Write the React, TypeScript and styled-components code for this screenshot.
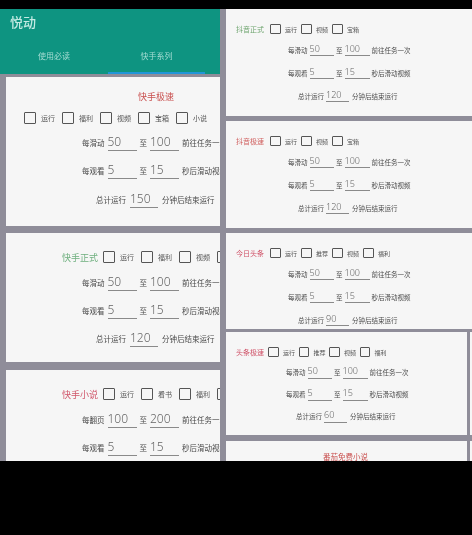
import React from "react";
import styled, { createGlobalStyle } from "styled-components";

const Global = createGlobalStyle`
  html, body { margin: 0; padding: 0; background: #000; }
  body { font-family: "Noto Sans CJK SC", "Noto Sans", sans-serif; }
`;

const Screen = styled.div`
  width: 472px; height: 535px; background: #000; padding-top: 9px; box-sizing: border-box; overflow: hidden;
`;
const Stage = styled.div`
  display: flex; height: 452px; background: #8f8d99; overflow: hidden; filter: blur(0.7px);
`;
const LeftCol = styled.div`
  width: 220px; flex: none; display: flex; flex-direction: column; overflow: hidden;
`;
const RightCol = styled.div`
  width: 246px; margin-left: 6px; flex: none; display: flex; flex-direction: column; overflow: hidden;
`;
const Header = styled.header`
  height: 65px; flex: none; background: #0e9481; color: #c4ebe4; display: flex; flex-direction: column;
`;
const AppTitle = styled.div`
  font-size: 13px; line-height: 18px; padding: 4px 0 0 10px; height: 26px; font-weight: 500; box-sizing: content-box;
`;
const Tabs = styled.nav`
  display: flex; flex: 1;
`;
const Tab = styled.div<{ $active?: boolean; $w: number }>`
  width: ${p => p.$w}px; display: flex; align-items: center; justify-content: center; font-size: 8px; color: #a5dcd3;
  box-sizing: border-box; border-bottom: 2px solid ${p => (p.$active ? "#2196d8" : "transparent")};
`;
const Card = styled.section<{ $h: number; $mt: number; $ml?: number; $pt: number }>`
  flex: none; box-sizing: border-box; background: #f6f6f6; overflow: hidden;
  height: ${p => p.$h}px; margin-top: ${p => p.$mt}px; margin-left: ${p => p.$ml ?? 0}px; padding-top: ${p => p.$pt}px;
`;
const Framed = styled.div<{ $mt: number }>`
  flex: none; display: flex; margin-top: ${p => p.$mt}px; background: #f6f6f6;
  & > section { width: 241px; margin-top: 0; }
`;
const EdgeBar = styled.div`
  width: 3px; flex: none; background: #8f8d99;
`;
const CenterTitle = styled.div<{ $x: number; $size: number }>`
  color: #c9504f; font-size: ${p => p.$size}px; line-height: 14px; margin-left: ${p => p.$x}px; white-space: nowrap;
`;
const CheckRow = styled.div<{ $x: number; $h: number; $mt?: number }>`
  display: flex; align-items: center; white-space: nowrap; height: ${p => p.$h}px;
  padding-left: ${p => p.$x}px; margin-top: ${p => p.$mt ?? 0}px;
`;
const Title = styled.span<{ $c: string; $size: number; $w: number }>`
  color: ${p => p.$c}; font-size: ${p => p.$size}px; width: ${p => p.$w}px; flex: none;
`;
const Check = styled.label<{ $step: number; $size: number; $font: number }>`
  display: flex; align-items: center; flex: none; width: ${p => p.$step}px; font-size: ${p => p.$font}px; color: #555;
  & > i { display: block; box-sizing: border-box; width: ${p => p.$size}px; height: ${p => p.$size}px; border: 1px solid #555; border-radius: 1px; margin-right: ${p => p.$size * 0.42}px; flex: none; }
`;
const Row = styled.div<{ $x: number; $h: number; $font: number }>`
  display: flex; align-items: center; white-space: nowrap; height: ${p => p.$h}px;
  padding-left: ${p => p.$x}px; font-size: ${p => p.$font}px; color: #4a4a4a;
`;
const Field = styled.span<{ $w: number; $size: number; $ml: number; $mr: number }>`
  display: block; flex: none; box-sizing: border-box; width: ${p => p.$w}px; font-size: ${p => p.$size}px; font-weight: 300;
  margin: 0 ${p => p.$mr}px 0 ${p => p.$ml}px; color: #666; border-bottom: 1px solid #8a8a8a; line-height: 1.25; padding-bottom: 1px;
  font-family: "Noto Sans", sans-serif;
`;

type Pair = [number, number];
type RowsProps = { a: Pair; b: Pair; total: number; firstLabel: string; h: number };

const Left = ({ a, b, total, firstLabel, h }: RowsProps) => (
  <>
    <Row $x={76} $h={h} $font={7.5}>{firstLabel}<Field $w={29} $size={12} $ml={3} $mr={3}>{a[0]}</Field>至<Field $w={29} $size={12} $ml={3} $mr={3}>{a[1]}</Field>前往任务一次</Row>
    <Row $x={76} $h={h} $font={7.5}>每观看<Field $w={29} $size={12} $ml={3} $mr={3}>{b[0]}</Field>至<Field $w={29} $size={12} $ml={3} $mr={3}>{b[1]}</Field>秒后滑动视频</Row>
    <Row $x={90} $h={h} $font={7.5}>总计运行<Field $w={28} $size={12} $ml={4} $mr={4}>{total}</Field>分钟后结束运行</Row>
  </>
);

const Right = ({ a, b, total, firstLabel, x, tx, h }: RowsProps & { x: number; tx: number }) => (
  <>
    <Row $x={x} $h={h} $font={6.5}>{firstLabel}<Field $w={24} $size={9} $ml={2} $mr={2.5}>{a[0]}</Field>至<Field $w={25} $size={9} $ml={2} $mr={2}>{a[1]}</Field>前往任务一次</Row>
    <Row $x={x} $h={h} $font={6.5}>每观看<Field $w={24} $size={9} $ml={2} $mr={2.5}>{b[0]}</Field>至<Field $w={25} $size={9} $ml={2} $mr={2}>{b[1]}</Field>秒后滑动视频</Row>
    <Row $x={tx} $h={h} $font={6.5}>总计运行<Field $w={23} $size={9} $ml={2} $mr={3}>{total}</Field>分钟后结束运行</Row>
  </>
);

const LChecks = ({ items }: { items: string[] }) => (
  <>{items.map(t => <Check key={t} $step={38} $size={12} $font={7}><i />{t}</Check>)}</>
);
const RChecks = ({ items, step }: { items: string[]; step: number }) => (
  <>{items.map(t => <Check key={t} $step={step} $size={10.5} $font={6}><i />{t}</Check>)}</>
);

const rightCards = [
  { title: "抖音正式", color: "#6fa56f", checks: ["运行", "视频", "宝箱"], total: 120, h: 107, mt: 0 },
  { title: "抖音极速", color: "#d0605f", checks: ["运行", "视频", "宝箱"], total: 120, h: 107, mt: 5 },
  { title: "今日头条", color: "#cf5066", checks: ["运行", "推荐", "视频", "福利"], total: 90, h: 96, mt: 5 },
];

export default function App() {
  return (
    <Screen>
      <Global />
      <Stage>
        <LeftCol>
          <Header>
            <AppTitle>悦动</AppTitle>
            <Tabs>
              <Tab $w={108}>使用必读</Tab>
              <Tab $w={97} $active>快手系列</Tab>
            </Tabs>
          </Header>
          <Card $h={149} $mt={3} $ml={6} $pt={13}>
            <CenterTitle $x={132} $size={9}>快手极速</CenterTitle>
            <CheckRow $x={18} $h={20} $mt={4}><LChecks items={["运行", "福利", "视频", "宝箱", "小说"]} /></CheckRow>
            <Left a={[50, 100]} b={[5, 15]} total={150} firstLabel="每滑动" h={28.5} />
          </Card>
          <Card $h={129} $mt={7} $ml={6} $pt={12.5}>
            <CheckRow $x={56} $h={23}>
              <Title $c="#6fb07f" $size={9} $w={41}>快手正式</Title>
              <LChecks items={["运行", "福利", "视频", "宝箱"]} />
            </CheckRow>
            <Left a={[50, 100]} b={[5, 15]} total={120} firstLabel="每滑动" h={28} />
          </Card>
          <Card $h={100} $mt={8} $ml={6} $pt={12.5}>
            <CheckRow $x={56} $h={23}>
              <Title $c="#d0566a" $size={9} $w={41}>快手小说</Title>
              <LChecks items={["运行", "看书", "福利", "宝箱"]} />
            </CheckRow>
            <Left a={[100, 200]} b={[5, 15]} total={120} firstLabel="每翻页" h={28} />
          </Card>
        </LeftCol>
        <RightCol>
          {rightCards.map(c => (
            <Card key={c.title} $h={c.h} $mt={c.mt} $pt={11}>
              <CheckRow $x={10} $h={18}>
                <Title $c={c.color} $size={7} $w={34}>{c.title}</Title>
                <RChecks items={c.checks} step={31} />
              </CheckRow>
              <Right a={[50, 100]} b={[5, 15]} total={c.total} firstLabel="每滑动" x={62} tx={72} h={23} />
            </Card>
          ))}
          <Framed $mt={3}>
            <Card $h={103} $mt={0} $pt={11}>
              <CheckRow $x={10} $h={18}>
                <Title $c="#cf5066" $size={7} $w={32}>头条极速</Title>
                <RChecks items={["运行", "推荐", "视频", "福利"]} step={30.5} />
              </CheckRow>
              <Right a={[50, 100]} b={[5, 15]} total={60} firstLabel="每滑动" x={60} tx={70} h={22} />
            </Card>
            <EdgeBar />
          </Framed>
          <Framed $mt={6}>
            <Card $h={20} $mt={0} $pt={9}>
              <CenterTitle $x={97} $size={7.5}>番茄免费小说</CenterTitle>
            </Card>
            <EdgeBar />
          </Framed>
        </RightCol>
      </Stage>
    </Screen>
  );
}
